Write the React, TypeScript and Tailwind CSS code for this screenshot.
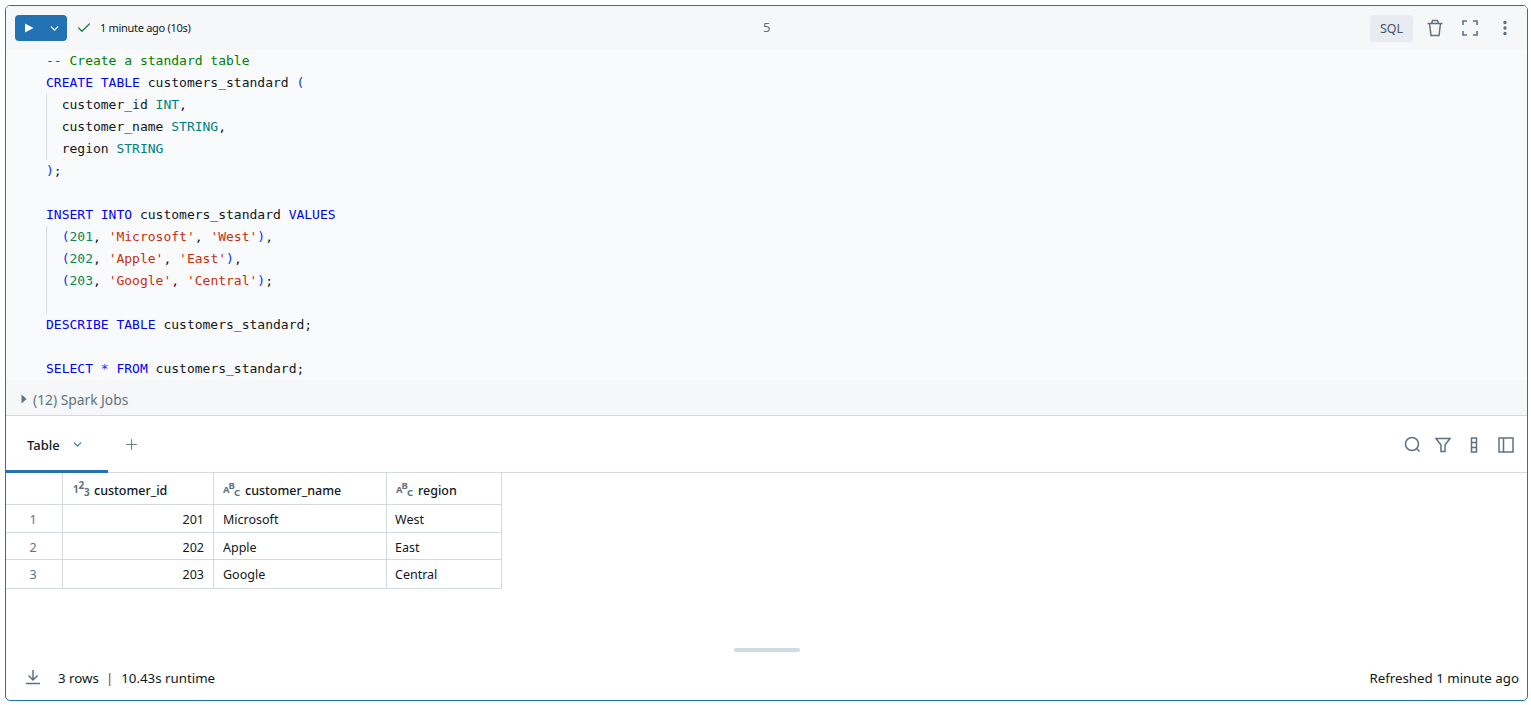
import { Check, ChevronDown, Plus } from 'lucide-react'

const KW = 'text-[#0000ff]'
const TY = 'text-[#008080]'
const STR = 'text-[#c72e0f]'
const NUM = 'text-[#098658]'
const BR = 'text-[#0431fa]'
const CM = 'text-[#008000]'

type Tok = [string, string?]

const lines: { toks: Tok[]; guide?: boolean }[] = [
  { toks: [['-- Create a standard table', CM]] },
  { toks: [['CREATE TABLE', KW], [' customers_standard '], ['(', BR]] },
  { guide: true, toks: [['  customer_id '], ['INT', TY], [',']] },
  { guide: true, toks: [['  customer_name '], ['STRING', TY], [',']] },
  { guide: true, toks: [['  region '], ['STRING', TY]] },
  { toks: [[')', BR], [';']] },
  { toks: [] },
  { toks: [['INSERT INTO', KW], [' customers_standard '], ['VALUES', KW]] },
  { guide: true, toks: [['  '], ['(', BR], ['201', NUM], [', '], ["'Microsoft'", STR], [', '], ["'West'", STR], [')', BR], [',']] },
  { guide: true, toks: [['  '], ['(', BR], ['202', NUM], [', '], ["'Apple'", STR], [', '], ["'East'", STR], [')', BR], [',']] },
  { guide: true, toks: [['  '], ['(', BR], ['203', NUM], [', '], ["'Google'", STR], [', '], ["'Central'", STR], [')', BR], [';']] },
  { guide: true, toks: [] },
  { toks: [['DESCRIBE TABLE', KW], [' customers_standard;']] },
  { toks: [] },
  { toks: [['SELECT', KW], [' '], ['*', BR], [' '], ['FROM', KW], [' customers_standard;']] },
]

const rows = [
  ['1', '201', 'Microsoft', 'West', 'h-[28px]', 'pt-[4px]'],
  ['2', '202', 'Apple', 'East', 'h-[27px]', 'pt-[5px]'],
  ['3', '203', 'Google', 'Central', 'h-[28px]', 'pt-[2px]'],
]

function NumIcon() {
  return (
    <svg width="17" height="17" viewBox="0 0 17 17" fill="#5f7281" fontWeight="700" fontFamily="'Noto Sans', sans-serif" className="overflow-visible">
      <text x="0" y="13" fontSize="10">1</text>
      <text x="5.5" y="8.5" fontSize="10">2</text>
      <text x="11" y="15.5" fontSize="10">3</text>
    </svg>
  )
}

function TextIcon() {
  return (
    <svg width="17" height="17" viewBox="0 0 17 17" fill="#5f7281" fontWeight="700" fontFamily="'Noto Sans', sans-serif" className="overflow-visible">
      <text x="0" y="13" fontSize="9.5">A</text>
      <text x="5.5" y="8.5" fontSize="9.5">B</text>
      <text x="11" y="15.5" fontSize="9.5">C</text>
    </svg>
  )
}

export default function App() {
  return (
    <div className="h-[705px] pt-[5px] pl-[5px] pr-[3px] pb-[4px] bg-white font-['Noto_Sans',sans-serif] text-[13px] text-[#11171c] overflow-hidden">
      <div className="h-full flex flex-col border border-[#2272b4] rounded-[5px] overflow-hidden">
        {/* Cell toolbar */}
        <div className="h-[44px] shrink-0 bg-[#f6f7f9] flex items-center pl-[9px] pr-[15px] relative">
          <div className="w-[52px] h-[26px] bg-[#2272b4] rounded-[4px] flex items-center text-white">
            <svg width="10" height="10" viewBox="0 0 10 10" className="ml-[9px]">
              <path d="M1 0.5 L9.5 5 L1 9.5 Z" fill="white" />
            </svg>
            <ChevronDown size={13} strokeWidth={2.5} className="ml-[14px]" />
          </div>
          <Check size={16} strokeWidth={2} className="ml-[9px] text-[#277c43]" />
          <span className="ml-[8px] text-[11px] text-[#11171c] tracking-[-0.3px]">1 minute ago (10s)</span>
          <span className="absolute left-[757px] text-[13px] text-[#5f7281]">5</span>
          <div className="ml-auto flex items-center text-[#5f7281]">
            <span className="w-[43px] h-[27px] pt-[3px] rounded-[4px] bg-[#e8ecf0] flex items-center justify-center text-[12.5px] text-[#445461]">SQL</span>
            <svg width="18" height="18" viewBox="0 0 18 18" fill="none" stroke="currentColor" strokeWidth="1.5" className="ml-[13px]">
              <path d="M1.5 4.5 H16.5 M5.5 4.5 L6.5 1.5 H11.5 L12.5 4.5 M3.5 4.5 L5 16.5 H13 L14.5 4.5" />
            </svg>
            <svg width="16" height="16" viewBox="0 0 16 16" fill="none" stroke="currentColor" strokeWidth="1.6" className="ml-[18px]">
              <path d="M1 5 V1 H5 M11 1 H15 V5 M15 11 V15 H11 M5 15 H1 V11" />
            </svg>
            <svg width="4" height="16" viewBox="0 0 4 16" fill="currentColor" className="ml-[25px] mr-[5px]">
              <circle cx="2" cy="2.5" r="1.7" />
              <circle cx="2" cy="8" r="1.7" />
              <circle cx="2" cy="13.5" r="1.7" />
            </svg>
          </div>
        </div>

        {/* Code */}
        <div className="h-[330px] shrink-0 bg-[#f9fafb] pl-[40px] font-['DejaVu_Sans_Mono',monospace] text-[13px] text-[#11171c]">
          {lines.map((line, i) => (
            <div key={i} className="h-[22px] leading-[22px] whitespace-pre relative">
              {line.guide && <span className="absolute left-0 top-0 bottom-0 w-px bg-[#d8dde2]" />}
              {line.toks.map(([t, c], j) => (
                <span key={j} className={c}>{t}</span>
              ))}
            </div>
          ))}
        </div>

        {/* Spark jobs */}
        <div className="h-[36px] shrink-0 bg-[#f6f7f9] border-b border-[#d1d9e1] flex items-center pl-[15px] text-[#5f7281]">
          <svg width="6" height="10" viewBox="0 0 6 10" className="mr-[6px] mt-[3px]">
            <path d="M0.5 0.5 L5.5 5 L0.5 9.5 Z" fill="#5f7281" />
          </svg>
          <span className="text-[13.8px] pt-[5px]">(12) Spark Jobs</span>
        </div>

        {/* Result tabs */}
        <div className="h-[57px] shrink-0 border-b border-[#d1d9e1] flex items-stretch">
          <div className="w-[102px] border-b-[3px] border-[#2272b4] -mb-px flex items-center pl-[21px]">
            <span className="text-[13px] font-medium text-[#11171c] pt-[5px]">Table</span>
            <ChevronDown size={13} strokeWidth={2} className="ml-[11px] mt-[3px] text-[#2272b4]" />
          </div>
          <div className="flex items-center ml-[15px] pt-[1px]">
            <Plus size={17} strokeWidth={1.3} className="text-[#5f7281]" />
          </div>
          <div className="ml-auto flex items-center pr-[13px] text-[#5f7281] pt-[1px]">
            <svg width="17" height="17" viewBox="0 0 17 17" fill="none" stroke="currentColor" strokeWidth="1.5">
              <circle cx="8" cy="8" r="6.5" />
              <path d="M12.8 12.8 L15.5 15.5" />
            </svg>
            <svg width="16" height="16" viewBox="0 0 16 16" fill="none" stroke="currentColor" strokeWidth="1.5" className="ml-[14px]">
              <path d="M1 1.5 H15 L10 8 V14.5 H6 V8 Z" />
            </svg>
            <svg width="8" height="16" viewBox="0 0 8 16" fill="none" stroke="currentColor" strokeWidth="1.5" className="ml-[19px]">
              <path d="M1.5 1 H6.5 V15 H1.5 Z M1.5 5.5 H6.5 M1.5 10.5 H6.5" />
            </svg>
            <svg width="16" height="16" viewBox="0 0 16 16" fill="none" stroke="currentColor" strokeWidth="1.5" className="ml-[20px]">
              <path d="M1 1 H15 V15 H1 Z M5.5 1 V15" />
            </svg>
          </div>
        </div>

        {/* Result table */}
        <div className="flex-1 min-h-0">
          <div className="w-[496px] border-r border-b border-[#d1d9e1] text-[12.5px]">
            <div className="h-[32px] flex border-b border-[#d1d9e1] font-medium">
              <div className="w-[57px] border-r border-[#d1d9e1]" />
              <div className="w-[151px] border-r border-[#d1d9e1] flex items-center gap-[4px] pl-[10px]">
                <NumIcon />
                <span className="pt-[6px]">customer_id</span>
              </div>
              <div className="w-[173px] border-r border-[#d1d9e1] flex items-center gap-[5px] pl-[9px]">
                <TextIcon />
                <span className="pt-[6px]">customer_name</span>
              </div>
              <div className="flex-1 flex items-center gap-[5px] pl-[9px]">
                <TextIcon />
                <span className="pt-[6px]">region</span>
              </div>
            </div>
            {rows.map(([n, id, name, region, h, pt], i) => (
              <div key={n} className={`flex ${h} ${i < 2 ? 'border-b border-[#d1d9e1]' : ''}`}>
                <div className={`w-[57px] ${pt} border-r border-[#d1d9e1] flex items-center justify-center text-[#5f7281] pr-[2px]`}>{n}</div>
                <div className={`w-[151px] ${pt} border-r border-[#d1d9e1] flex items-center justify-end pr-[9px]`}>{id}</div>
                <div className={`w-[173px] ${pt} border-r border-[#d1d9e1] flex items-center pl-[9px]`}>{name}</div>
                <div className={`flex-1 ${pt} flex items-center pl-[8px]`}>{region}</div>
              </div>
            ))}
          </div>
        </div>

        {/* Footer */}
        <div className="h-[52px] shrink-0 flex flex-col items-center">
          <div className="w-[66px] h-[4px] rounded-full bg-[#d1d9e1]" />
          <div className="w-full flex items-center mt-[14px] pl-[19px] pr-[8px] text-[13.3px]">
            <svg width="16" height="16" viewBox="0 0 16 16" fill="none" stroke="#5f7281" strokeWidth="1.5">
              <path d="M8 1 V10.5 M3.5 6.5 L8 11 L12.5 6.5 M1 14.5 H15" />
            </svg>
            <span className="ml-[17px] pt-[3px]">3 rows</span>
            <span className="ml-[7px] mr-[8px] pt-[3px] text-[#8a3a0a]">|</span>
            <span className="pt-[3px]">10.43s runtime</span>
            <span className="ml-auto pt-[3px]">Refreshed 1 minute ago</span>
          </div>
        </div>
      </div>
    </div>
  )
}
